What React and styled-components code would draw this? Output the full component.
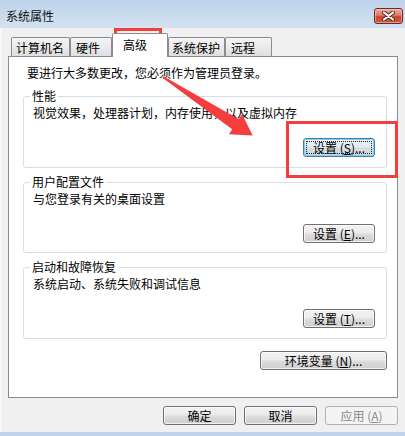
import React from "react";
import styled, { createGlobalStyle, css } from "styled-components";

const Global = createGlobalStyle`
  html, body { margin: 0; padding: 0; background: #ffffff; }
  body {
    font-family: "Noto Sans CJK SC", "Noto Sans", sans-serif;
    font-size: 12px;
    color: #000;
  }
`;

const Window = styled.div`
  position: relative;
  width: 405px;
  height: 436px;
  box-sizing: border-box;
  background: #f0f0f0;
  border-bottom: 4px solid #bfd4ea;
  box-shadow: inset 2px 0 0 #f8f8f8;
  display: flex;
  flex-direction: column;
  overflow: hidden;
`;

const TitleBar = styled.div`
  height: 28px;
  flex: none;
  display: flex;
  align-items: flex-start;
  justify-content: space-between;
  background: linear-gradient(180deg, #bcd2ea 0%, #c9dbee 50%, #d3e2f1 100%);
`;

const Title = styled.div`
  margin: 8px 0 0 6px;
  line-height: 16px;
  font-size: 12px;
  color: #111;
`;

const CloseButton = styled.div`
  margin: 8px 2px 0 0;
  width: 29px;
  height: 16px;
  box-sizing: border-box;
  border: 1px solid #6a2a26;
  border-radius: 3px;
  background: linear-gradient(180deg, #eab0a3 0%, #dc7a67 45%, #c8472f 55%, #cf5a3f 100%);
  box-shadow: inset 0 0 0 1px rgba(255, 210, 200, 0.5);
  display: flex;
  align-items: center;
  justify-content: center;
`;

const Body = styled.div`
  flex: 1;
  display: flex;
  flex-direction: column;
  padding: 5px 7px 0 8px;
`;

const TabStrip = styled.div`
  position: relative;
  z-index: 1;
  height: 24px;
  margin-bottom: -1px;
  padding-left: 3px;
  display: flex;
  align-items: flex-end;
`;

const Tab = styled.div`
  box-sizing: border-box;
  width: ${(p) => p.$w}px;
  border: 1px solid #898c95;
  border-bottom: none;
  border-radius: 2px 2px 0 0;
  display: flex;
  align-items: center;
  line-height: 16px;
  white-space: nowrap;
  ${(p) =>
    p.$active
      ? css`
          height: 24px;
          padding: 0 0 1px 10px;
          background: #ffffff;
        `
      : css`
          height: 19px;
          margin-bottom: 1px;
          padding: 1px 0 0 ${p.$pad}px;
          background: linear-gradient(180deg, #f4f4f4 0%, #ebebeb 50%, #dedede 100%);
        `}
`;

const Panel = styled.div`
  height: 342px;
  box-sizing: border-box;
  background: #ffffff;
  border: 1px solid #898c95;
  padding: 8px 10px 0 14px;
  display: flex;
  flex-direction: column;
`;

const Info = styled.div`
  padding-left: 4px;
  line-height: 16px;
`;

const GroupBox = styled.div`
  position: relative;
  box-sizing: border-box;
  height: ${(p) => p.$h}px;
  margin-top: ${(p) => p.$mt}px;
  border: 1px solid #d5dfe6;
  border-radius: 3px;
  padding: 8px 11px 0 9px;
  display: flex;
  flex-direction: column;
`;

const Legend = styled.div`
  position: absolute;
  top: -9px;
  left: 6px;
  padding: 0 2px;
  background: #ffffff;
  line-height: 16px;
`;

const Desc = styled.div`
  line-height: 16px;
`;

const Button = styled.div`
  position: relative;
  box-sizing: border-box;
  width: ${(p) => p.$w}px;
  height: 19px;
  flex: none;
  margin-top: ${(p) => p.$mt || 0}px;
  align-self: ${(p) => (p.$right ? "flex-end" : "auto")};
  border: 1px solid #707070;
  border-radius: 3px;
  background: linear-gradient(180deg, #f3f3f3 0%, #ebebeb 48%, #dddddd 52%, #cfcfcf 100%);
  box-shadow: inset 0 0 0 1px rgba(255, 255, 255, 0.7);
  display: flex;
  align-items: center;
  justify-content: center;
  line-height: 16px;
  white-space: nowrap;
  ${(p) =>
    p.$focus &&
    css`
      border-color: #3c7fb1;
      box-shadow: inset 0 0 0 1px #7fd0f5;
      background: linear-gradient(180deg, #eef4f8 0%, #e3ebf0 48%, #d5dde2 52%, #cfd6db 100%);
      &::after {
        content: "";
        position: absolute;
        inset: 2px;
        border: 1px dotted #222;
      }
    `}
  ${(p) =>
    p.$disabled &&
    css`
      border-color: #adb2b5;
      background: #f4f4f4;
      box-shadow: none;
      color: #8a8a8a;
    `}
`;

const Key = styled.span`
  text-decoration: underline;
`;

const Footer = styled.div`
  margin-top: 8px;
  display: flex;
  justify-content: flex-end;
  gap: 8px;
`;

const Overlay = styled.svg`
  position: absolute;
  left: 0;
  top: 0;
  pointer-events: none;
`;

const CloseX = () => (
  <svg width="13" height="10" viewBox="0 0 13 10">
    <path
      d="M2 1.5 L11 8.5 M11 1.5 L2 8.5"
      stroke="#5a2420"
      strokeWidth="4"
      strokeLinecap="round"
    />
    <path
      d="M2 1.5 L11 8.5 M11 1.5 L2 8.5"
      stroke="#ffffff"
      strokeWidth="2.2"
      strokeLinecap="round"
    />
  </svg>
);

const tabs = [
  { label: "计算机名", w: 59, pad: 4 },
  { label: "硬件", w: 42, pad: 5 },
  { label: "高级", w: 56, active: true },
  { label: "系统保护", w: 57, pad: 3 },
  { label: "远程", w: 47, pad: 5 },
];

const groups = [
  { title: "性能", desc: "视觉效果，处理器计划，内存使用，以及虚拟内存", key: "S", h: 72, mt: 15, focus: true },
  { title: "用户配置文件", desc: "与您登录有关的桌面设置", key: "E", h: 71, mt: 14 },
  { title: "启动和故障恢复", desc: "系统启动、系统失败和调试信息", key: "T", h: 72, mt: 14 },
];

export default function App() {
  return (
    <>
      <Global />
      <Window>
        <TitleBar>
          <Title>系统属性</Title>
          <CloseButton>
            <CloseX />
          </CloseButton>
        </TitleBar>
        <Body>
          <TabStrip>
            {tabs.map((t) => (
              <Tab key={t.label} $w={t.w} $pad={t.pad} $active={t.active}>
                {t.label}
              </Tab>
            ))}
          </TabStrip>
          <Panel>
            <Info>要进行大多数更改，您必须作为管理员登录。</Info>
            {groups.map((g) => (
              <GroupBox key={g.title} $h={g.h} $mt={g.mt}>
                <Legend>{g.title}</Legend>
                <Desc>{g.desc}</Desc>
                <Button $w={72} $mt={17} $right $focus={g.focus}>
                  设置 (<Key>{g.key}</Key>)...
                </Button>
              </GroupBox>
            ))}
            <Button $w={127} $mt={12} $right>
              环境变量 (<Key>N</Key>)...
            </Button>
          </Panel>
          <Footer>
            <Button $w={73}>确定</Button>
            <Button $w={73}>取消</Button>
            <Button $w={73} $disabled>
              应用 (<Key>A</Key>)
            </Button>
          </Footer>
        </Body>
        <Overlay width="405" height="436" viewBox="0 0 405 436">
          <rect x="115.5" y="29.5" width="45" height="26" fill="none" stroke="#f43d3d" strokeWidth="3" />
          <rect x="287.5" y="122.5" width="109" height="54" fill="none" stroke="#f43d3d" strokeWidth="3" />
          <polygon
            points="163.5,76.2 238.8,119.2 242,114.1 252.7,135.4 229,134.3 232.2,129.2 162.5,77.8"
            fill="#f43d3d"
          />
        </Overlay>
      </Window>
    </>
  );
}
